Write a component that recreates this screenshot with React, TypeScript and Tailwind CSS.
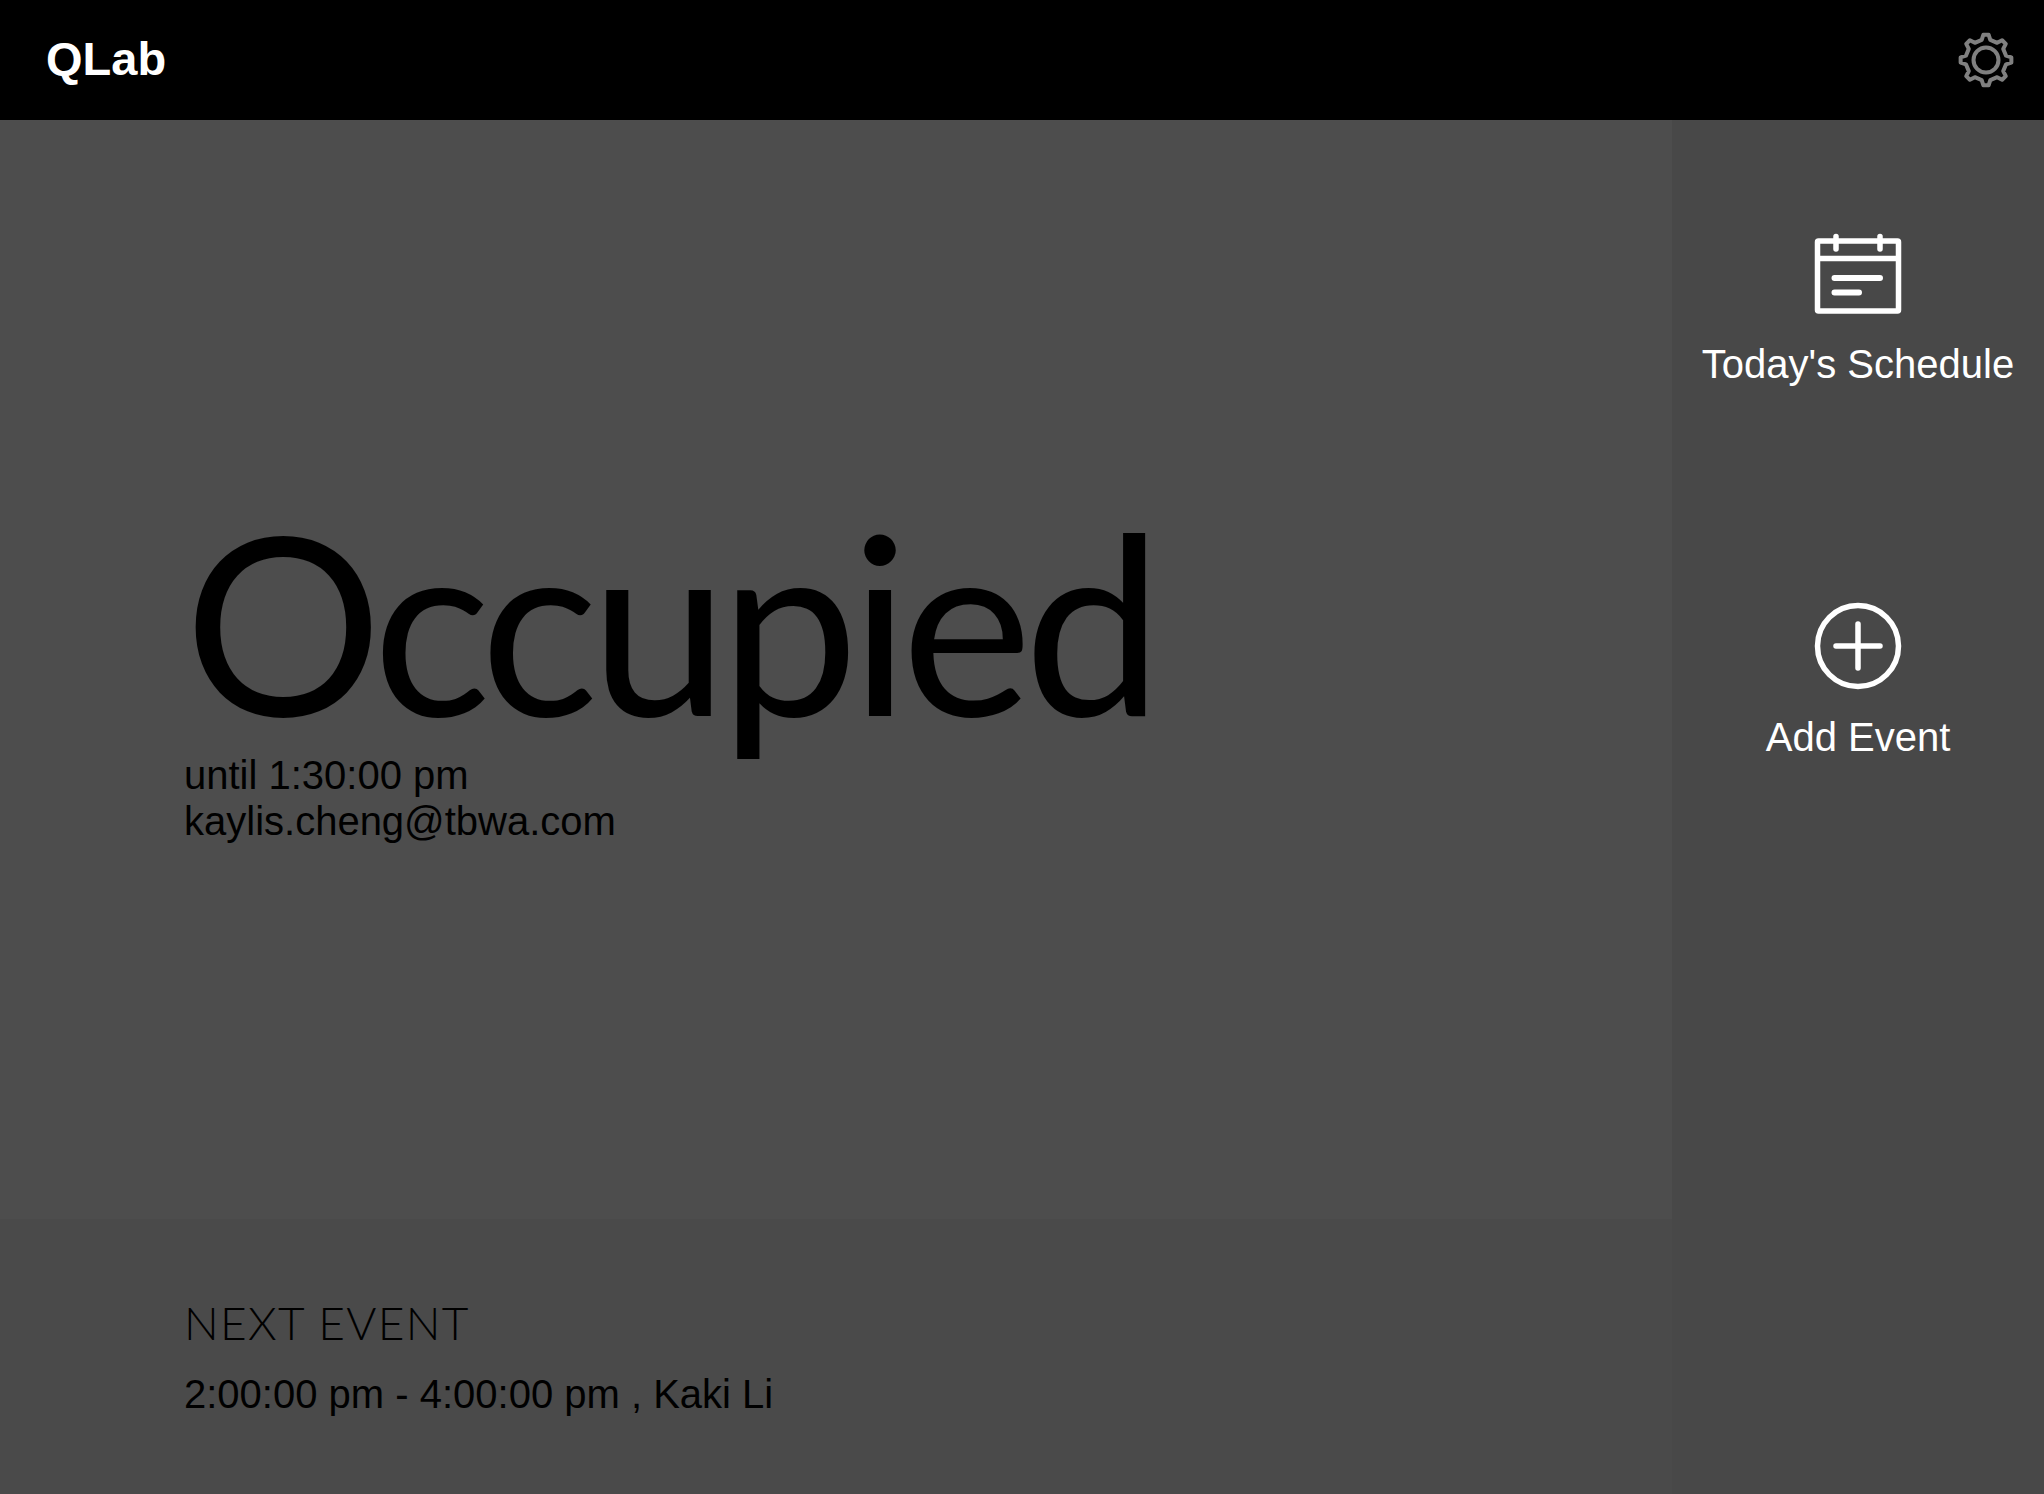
const sans = "font-['Liberation_Sans',Arial,sans-serif]";

function gearPath(cx: number, cy: number) {
  const teeth = 8;
  const pts: string[] = [];
  for (let i = 0; i < teeth; i++) {
    const a = (i * Math.PI * 2) / teeth - Math.PI / 2;
    const step = Math.PI * 2 / teeth;
    const ring: [number, number][] = [
      [20.5, a - step * 0.27],
      [25.5, a - step * 0.13],
      [25.5, a + step * 0.13],
      [20.5, a + step * 0.27],
    ];
    for (const [r, t] of ring) {
      pts.push(`${(cx + r * Math.cos(t)).toFixed(2)} ${(cy + r * Math.sin(t)).toFixed(2)}`);
    }
  }
  return `M${pts.join("L")}Z`;
}

function GearIcon() {
  return (
    <svg width="60" height="60" viewBox="0 0 60 60" fill="none" stroke="#808080" strokeWidth="4" strokeLinejoin="round">
      <path d={gearPath(30, 30)} />
      <circle cx="30" cy="30" r="12.5" />
    </svg>
  );
}

function CalendarIcon() {
  return (
    <svg width="90" height="84" viewBox="0 0 90 84" fill="none" stroke="#fff" strokeWidth="5.5" strokeLinecap="round" strokeLinejoin="round">
      <rect x="4.5" y="9" width="81" height="70" rx="1" />
      <path d="M4.5 26.5H85.5" strokeLinecap="butt" />
      <path d="M23 4.5V17M67 4.5V17" />
      <path d="M21.5 46H67M21.5 60.5H46" strokeWidth="6" />
    </svg>
  );
}

function PlusCircleIcon() {
  return (
    <svg width="88" height="88" viewBox="0 0 88 88" fill="none" stroke="#fff" strokeWidth="5.5" strokeLinecap="round">
      <circle cx="44" cy="44" r="40.5" />
      <path d="M22 44H66M44 22V66" />
    </svg>
  );
}

export default function App() {
  return (
    <div className={`flex h-[1494px] w-[2044px] flex-col overflow-hidden bg-[#4d4d4d] ${sans}`}>
      <header className="flex h-[120px] shrink-0 items-center justify-between bg-black pl-[46px] pr-[28px]">
        <span className="pb-[3px] text-[47px] font-bold leading-none text-white">QLab</span>
        <GearIcon />
      </header>

      <div className="flex min-h-0 flex-1">
        <main className="flex min-w-0 flex-1 flex-col">
          <section className="flex-1 pl-[184px] pt-[395px] text-black">
            <h1 className="font-['Lato',sans-serif] text-[248px] font-normal leading-[210px] tracking-[-8.5px]">
              Occupied
            </h1>
            <p className="mt-[28px] text-[40px] leading-[45px]">until 1:30:00 pm</p>
            <p className="text-[40px] leading-[46px]">kaylis.cheng@tbwa.com</p>
          </section>
          <section className="h-[275px] shrink-0 bg-[#4a4a4a] pl-[184px] pt-[76px] text-black">
            <h2 className="font-['Lato',sans-serif] text-[46px] font-light leading-[56px] tracking-[1.3px]">
              NEXT EVENT
            </h2>
            <p className="mt-[20px] text-[40px] leading-[46px]">2:00:00 pm - 4:00:00 pm , Kaki Li</p>
          </section>
        </main>

        <aside className="flex w-[372px] shrink-0 flex-col items-center bg-[#484848] pt-[112px] text-white">
          <button type="button" className="flex flex-col items-center">
            <CalendarIcon />
            <span className="mt-[25px] text-[40px] leading-[46px]">Today's Schedule</span>
          </button>
          <button type="button" className="mt-[215px] flex flex-col items-center">
            <PlusCircleIcon />
            <span className="mt-[24px] text-[40px] leading-[46px]">Add Event</span>
          </button>
        </aside>
      </div>
    </div>
  );
}
